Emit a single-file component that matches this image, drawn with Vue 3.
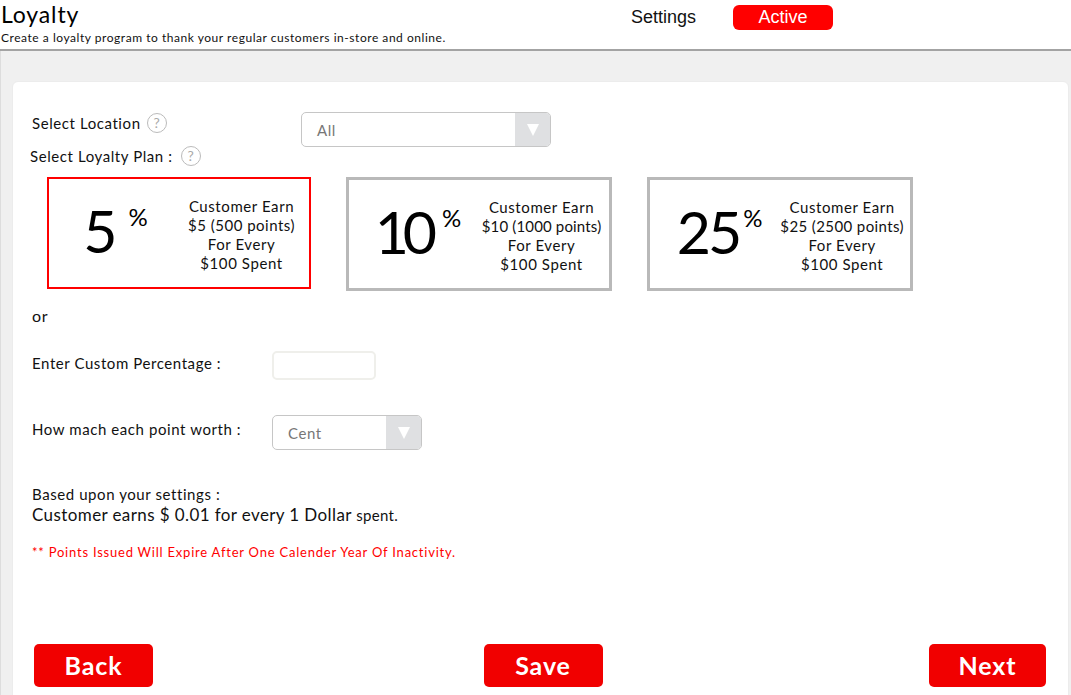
<script setup>
const plans = [
  { pct: '5', dollars: '$5 (500 points)', active: true, numTrack: 0, lineTrack: 0.5, signGap: 11, pad: 2 },
  { pct: '10', dollars: '$10 (1000 points)', active: false, numTrack: -6, lineTrack: 0.16, signGap: 11, pad: 7 },
  { pct: '25', dollars: '$25 (2500 points)', active: false, numTrack: -3, lineTrack: 0.4, signGap: 4, pad: 9 }
]
</script>

<template>
  <div class="page">
    <header class="top">
      <div class="titles">
        <h1>Loyalty</h1>
        <p>Create a loyalty program to thank your regular customers in-store and online.</p>
      </div>
      <span class="settings">Settings</span>
      <span class="active">Active</span>
    </header>
    <main class="body">
      <section class="card">
        <div class="loc-row">
          <div class="loc-label">
            <span>Select Location</span>
            <span class="help">?</span>
          </div>
          <div class="select loc-select">
            <span>All</span>
            <i class="arrow"><b></b></i>
          </div>
        </div>
        <div class="plan-label">
          <span>Select Loyalty Plan :</span>
          <span class="help">?</span>
        </div>
        <div class="plans">
          <div v-for="p in plans" :key="p.pct" class="plan" :class="{ on: p.active }">
            <div class="pct" :style="{ paddingLeft: p.pad + 'px' }">
              <span class="num" :style="{ letterSpacing: p.numTrack + 'px' }">{{ p.pct }}</span><span class="sign" :style="{ marginLeft: p.signGap + 'px' }">%</span>
            </div>
            <div class="earn">
              <div>Customer Earn</div>
              <div :style="{ letterSpacing: p.lineTrack + 'px' }">{{ p.dollars }}</div>
              <div>For Every</div>
              <div>$100 Spent</div>
            </div>
          </div>
        </div>
        <div class="or">or</div>
        <div class="field custom">
          <label>Enter Custom Percentage :</label>
          <div class="input"></div>
        </div>
        <div class="field worth">
          <label>How mach each point worth :</label>
          <div class="select cent-select">
            <span>Cent</span>
            <i class="arrow"><b></b></i>
          </div>
        </div>
        <div class="based">Based upon your settings :</div>
        <div class="earns">Customer earns $ 0.01 for every 1 Dollar <small>spent.</small></div>
        <div class="note">** Points Issued Will Expire After One Calender Year Of Inactivity.</div>
        <div class="actions">
          <button>Back</button>
          <button class="save">Save</button>
          <button class="next">Next</button>
        </div>
      </section>
    </main>
  </div>
</template>

<style>
html, body { margin: 0; background: #fff; overflow: hidden; }
</style>

<style scoped>
.page {
  width: 1071px;
  height: 695px;
  overflow: hidden;
  font-family: "Lato", "Noto Sans", sans-serif;
  color: #111;
  display: flex;
  flex-direction: column;
}
.top {
  height: 49px;
  flex: none;
  border-bottom: 2px solid #a3a3a3;
  display: flex;
  align-items: flex-start;
  padding-left: 1px;
  background: #fff;
}
.titles { width: 630px; }
h1 {
  margin: 1px 0 0;
  font-size: 23px;
  line-height: 27px;
  font-weight: 400;
  letter-spacing: 0.85px;
  color: #000;
}
p {
  margin: 2px 0 0;
  font-size: 12px;
  line-height: 15px;
  letter-spacing: 0.54px;
  color: #111;
}
.settings {
  font-family: "Liberation Sans", Arial, sans-serif;
  font-size: 18px;
  line-height: 20px;
  margin-top: 7px;
  width: 102px;
}
.active {
  width: 100px;
  height: 25px;
  margin-top: 5px;
  border-radius: 6px;
  background: #f00;
  color: #fff;
  font-family: "Liberation Sans", Arial, sans-serif;
  font-size: 18px;
  line-height: 25px;
  text-align: center;
}
.body {
  flex: 1;
  background: #f0f0f0;
  border-left: 1px solid #ddd;
  padding: 30px 2px 0 11px;
  min-height: 0;
}
.card {
  height: 640px;
  background: #fff;
  border: 1px solid #ececec;
  border-radius: 6px;
  box-sizing: border-box;
  padding: 30px 20px 0 19px;
  font-size: 15px;
  letter-spacing: 0.58px;
}
.loc-row { display: flex; align-items: flex-start; height: 35px; }
.loc-label {
  width: 269px;
  display: flex;
  align-items: center;
  gap: 6px;
  height: 22px;
}
.help {
  width: 18px;
  height: 18px;
  border: 1px solid #bbb;
  border-radius: 50%;
  color: #aaa;
  font-size: 14px;
  line-height: 18px;
  letter-spacing: 0;
  text-align: center;
}
.select {
  height: 35px;
  box-sizing: border-box;
  border: 1px solid #c6c6c6;
  border-radius: 5px;
  display: flex;
  align-items: center;
  justify-content: space-between;
  color: #777;
  overflow: hidden;
  background: #fff;
}
.select span { padding-left: 15px; }
.loc-select { width: 250px; }
.cent-select { width: 150px; }
.arrow {
  width: 35px;
  height: 100%;
  background: #dfe0e2;
  display: flex;
  align-items: center;
  justify-content: center;
}
.arrow b {
  width: 0;
  height: 0;
  border-left: 6px solid transparent;
  border-right: 6px solid transparent;
  border-top: 12px solid #fff;
}
.plan-label {
  display: flex;
  align-items: center;
  gap: 8px;
  margin: -2px 0 0 -2px;
  height: 22px;
}
.plans {
  display: flex;
  gap: 35px;
  margin: 10px 0 0 15px;
}
.plan {
  width: 266px;
  height: 114px;
  box-sizing: border-box;
  border: 3px solid #b9b9b9;
  display: flex;
  align-items: center;
  color: #111;
}
.plan.on {
  width: 264px;
  height: 112px;
  border: 2px solid #f00;
}
.pct {
  width: 131px;
  box-sizing: border-box;
  display: flex;
  align-items: flex-start;
  justify-content: center;
  height: 70px;
  color: #000;
  margin-top: -5px;
}
.num { font-size: 59px; line-height: 70px; }
.sign { font-size: 24px; line-height: 26px; margin-top: 8px; letter-spacing: 0; }
.earn {
  flex: 1;
  text-align: center;
  font-size: 15px;
  line-height: 19px;
  padding: 3px 6px 0 0;
  white-space: nowrap;
}
.or { font-size: 16px; line-height: 20px; margin-top: 15px; }
.field { display: flex; align-items: flex-start; }
.field label { width: 240px; flex: none; line-height: 18px; }
.custom { margin-top: 25px; height: 29px; }
.custom label { margin-top: 3px; }
.input {
  width: 104px;
  height: 29px;
  box-sizing: border-box;
  border: 2px solid #efefeb;
  border-radius: 5px;
}
.worth { margin-top: 35px; height: 35px; }
.worth label { margin-top: 5px; }
.based { margin-top: 35px; line-height: 18px; }
.earns { margin-top: 1px; font-size: 17px; line-height: 22px; letter-spacing: 0.4px; }
.earns small { font-size: 15px; letter-spacing: 0.3px; }
.note { margin-top: 17px; color: #f00; font-size: 13px; line-height: 18px; letter-spacing: 0.78px; }
.actions {
  display: flex;
  justify-content: space-between;
  margin-top: 83px;
  padding: 0 2px 0 2px;
}
button {
  width: 119px;
  height: 43px;
  border: 0;
  border-radius: 5px;
  background: #f10000;
  color: #fff;
  font-family: inherit;
  font-size: 25px;
  font-weight: 700;
  letter-spacing: 0.9px;
  padding: 0 0 2px;
}
.save { margin-left: 4px; }
.next { width: 117px; }
</style>
